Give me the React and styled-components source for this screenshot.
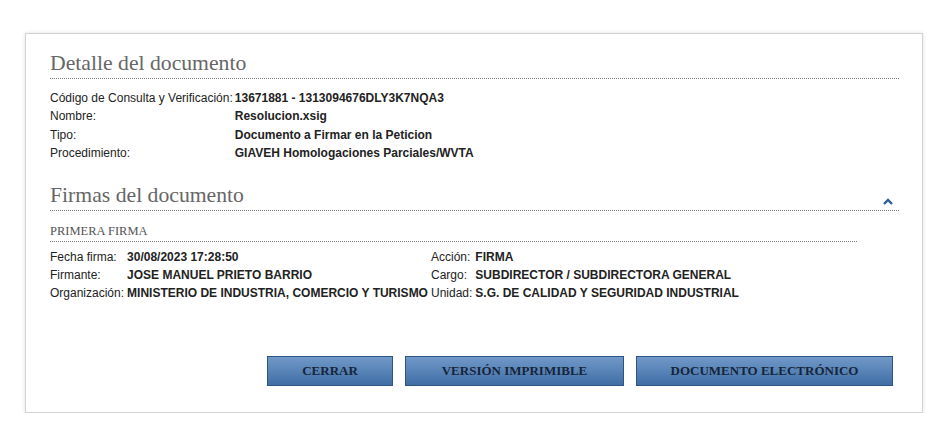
import styled, { createGlobalStyle } from "styled-components";

const GlobalStyle = createGlobalStyle`
  body {
    margin: 0;
    background: #ffffff;
    font-family: "Liberation Sans", Arial, sans-serif;
  }
`;

const Page = styled.div`
  padding: 33px 28px 0 25px;
`;

const Card = styled.div`
  box-sizing: border-box;
  height: 380px;
  border: 1px solid #d2d2d2;
  box-shadow: 0 0 4px rgba(0, 0, 0, 0.12);
  background: #fff;
  padding: 17px 23px 0 24px;
  display: flex;
  flex-direction: column;
`;

const SectionHead = styled.div`
  display: flex;
  align-items: flex-end;
  justify-content: space-between;
  border-bottom: 1px dotted #777;
  padding-bottom: 3px;
`;

const Title = styled.h2`
  margin: 0;
  font-family: "Liberation Serif", Georgia, serif;
  font-weight: normal;
  font-size: 21.7px;
  line-height: 24px;
  color: #666;
`;

const Toggle = styled.span`
  display: flex;
  margin: 0 6px 2px 0;
`;

const InfoTable = styled.div`
  display: grid;
  grid-template-columns: auto 1fr;
  column-gap: 2px;
  margin: 10px 0 20px;
  font-size: 12px;
  line-height: 18.4px;
  color: #222;
`;

const Label = styled.span`
  color: #222;
  white-space: nowrap;
`;

const Value = styled.span`
  font-weight: bold;
  color: #222;
  white-space: nowrap;
`;

const SubHead = styled.div`
  margin: 12px 42px 0 0;
  font-family: "Liberation Serif", "Times New Roman", serif;
  font-size: 12.5px;
  line-height: 16px;
  color: #555;
  border-bottom: 1px dotted #777;
  padding-bottom: 2px;
`;

const SignTable = styled.div`
  display: grid;
  grid-template-columns: auto auto auto 1fr;
  column-gap: 3px;
  margin-top: 6px;
  font-size: 12px;
  line-height: 18px;
`;

const Buttons = styled.div`
  margin-top: auto;
  margin-bottom: 26px;
  padding-right: 6px;
  display: flex;
  justify-content: flex-end;
  gap: 12px;
`;

const Button = styled.button`
  width: ${(p) => p.$w}px;
  height: 30px;
  border: 1px solid #2d5583;
  background: linear-gradient(#7199c9, #3f6ea5);
  font-family: "Liberation Serif", "Times New Roman", serif;
  font-weight: bold;
  font-size: 13px;
  color: #16253a;
  cursor: pointer;
  padding: 0;
`;

const info = [
  ["Código de Consulta y Verificación:", "13671881 - 1313094676DLY3K7NQA3"],
  ["Nombre:", "Resolucion.xsig"],
  ["Tipo:", "Documento a Firmar en la Peticion"],
  ["Procedimiento:", "GIAVEH Homologaciones Parciales/WVTA"],
];

const sign = [
  ["Fecha firma:", "30/08/2023 17:28:50", "Acción:", "FIRMA"],
  ["Firmante:", "JOSE MANUEL PRIETO BARRIO", "Cargo:", "SUBDIRECTOR / SUBDIRECTORA GENERAL"],
  ["Organización:", "MINISTERIO DE INDUSTRIA, COMERCIO Y TURISMO", "Unidad:", "S.G. DE CALIDAD Y SEGURIDAD INDUSTRIAL"],
];

export default function App() {
  return (
    <Page>
      <GlobalStyle />
      <Card>
        <SectionHead>
          <Title>Detalle del documento</Title>
        </SectionHead>
        <InfoTable>
          {info.map(([l, v]) => (
            <>
              <Label key={l}>{l}</Label>
              <Value key={v}>{v}</Value>
            </>
          ))}
        </InfoTable>

        <SectionHead>
          <Title>Firmas del documento</Title>
          <Toggle>
            <svg width="10" height="7" viewBox="0 0 10 7">
              <path d="M1 6 L5 2 L9 6" fill="none" stroke="#2e5d97" strokeWidth="2.4" />
            </svg>
          </Toggle>
        </SectionHead>
        <SubHead>PRIMERA FIRMA</SubHead>
        <SignTable>
          {sign.map((r) => (
            <>
              <Label key={r[0]}>{r[0]}</Label>
              <Value key={r[1]}>{r[1]}</Value>
              <Label key={r[2]}>{r[2]}</Label>
              <Value key={r[3]}>{r[3]}</Value>
            </>
          ))}
        </SignTable>

        <Buttons>
          <Button $w={126}>CERRAR</Button>
          <Button $w={219}>VERSIÓN IMPRIMIBLE</Button>
          <Button $w={257}>DOCUMENTO ELECTRÓNICO</Button>
        </Buttons>
      </Card>
    </Page>
  );
}
